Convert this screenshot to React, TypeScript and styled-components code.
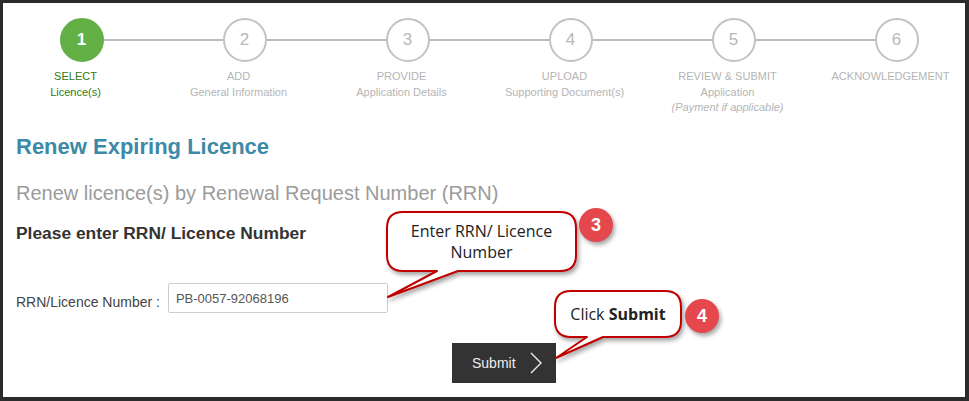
import React from 'react';
import styled, { createGlobalStyle } from 'styled-components';

const GlobalStyle = createGlobalStyle`
  html, body {
    margin: 0;
    padding: 0;
    overflow: hidden;
    background: #2b2b2b;
  }
  body {
    font-family: 'Liberation Sans', Arial, sans-serif;
  }
`;

const Page = styled.div`
  position: relative;
  width: 969px;
  height: 401px;
`;

const Frame = styled.div`
  box-sizing: border-box;
  width: 969px;
  height: 401px;
  border-style: solid;
  border-color: #2b2b2b;
  border-width: 3px 4px 4px 3px;
  background: #fff;
  overflow: hidden;
`;

const Stepper = styled.div`
  display: grid;
  grid-template-columns: repeat(6, 163px);
  margin: 15px 0 0 -3px;
`;

const Step = styled.div`
  display: flex;
  flex-direction: column;
  align-items: center;
`;

const CircleRow = styled.div`
  display: flex;
  align-items: center;
  width: 100%;
`;

const Line = styled.div<{ $off?: boolean }>`
  flex: 1;
  height: 2px;
  margin-top: -1px;
  background: ${({ $off }) => ($off ? 'transparent' : '#bcbcbc')};
`;

const Circle = styled.div<{ $active?: boolean }>`
  box-sizing: border-box;
  width: 44px;
  height: 44px;
  border-radius: 50%;
  border: 2px solid ${({ $active }) => ($active ? '#62b046' : '#c2c2c2')};
  background: ${({ $active }) => ($active ? '#62b046' : '#fff')};
  color: ${({ $active }) => ($active ? '#fff' : '#b8b8b8')};
  font-size: 17px;
  font-weight: ${({ $active }) => ($active ? 700 : 400)};
  display: flex;
  align-items: center;
  justify-content: center;
`;

const StepLabel = styled.div<{ $active?: boolean }>`
  margin-top: 6px;
  padding-right: 12px;
  font-size: 11px;
  line-height: 16px;
  text-align: center;
  color: ${({ $active }) => ($active ? '#2f7a10' : '#b5b5b5')};
  white-space: nowrap;
`;

const Note = styled.div`
  font-style: italic;
  line-height: 15px;
`;

const Content = styled.div`
  padding: 19px 13px 0;
`;

const Title = styled.h2`
  margin: 0;
  font-size: 22px;
  line-height: 26px;
  font-weight: 700;
  color: #3c8aa7;
`;

const Subtitle = styled.div`
  margin-top: 21px;
  font-size: 20px;
  line-height: 24px;
  color: #9b9b9b;
`;

const SectionHeading = styled.h3`
  margin: 18px 0 0;
  font-size: 17.4px;
  line-height: 20px;
  font-weight: 700;
  color: #333;
`;

const FormRow = styled.div`
  margin-top: 40px;
  display: flex;
  align-items: center;
  gap: 8px;
`;

const FieldLabel = styled.label`
  font-size: 14px;
  line-height: 16px;
  color: #444;
  padding-top: 8px;
`;

const TextInput = styled.input`
  box-sizing: border-box;
  width: 220px;
  height: 30px;
  border: 1px solid #ccc;
  border-radius: 2px;
  padding: 0 7px;
  font-family: 'Liberation Sans', Arial, sans-serif;
  font-size: 13px;
  color: #555;
  outline: none;
`;

const ButtonRow = styled.div`
  margin-top: 30px;
  padding-left: 436px;
`;

const SubmitButton = styled.button`
  box-sizing: border-box;
  width: 104px;
  height: 40px;
  border: none;
  background: #333;
  color: #eee;
  font-family: 'Liberation Sans', Arial, sans-serif;
  font-size: 14px;
  display: flex;
  align-items: center;
  padding: 0 0 0 20px;
  gap: 14px;
  cursor: pointer;
`;

const Bubble = styled.div<{ $left: number; $top: number; $w: number; $h: number }>`
  position: absolute;
  left: ${({ $left }) => $left}px;
  top: ${({ $top }) => $top}px;
  width: ${({ $w }) => $w}px;
  height: ${({ $h }) => $h}px;
`;

const BubbleShape = styled.svg`
  position: absolute;
  left: 0;
  top: 0;
  overflow: visible;
  filter: drop-shadow(2px 3px 2px rgba(0, 0, 0, 0.35));
`;

const BubbleText = styled.div`
  position: absolute;
  inset: 0;
  display: flex;
  align-items: center;
  justify-content: center;
  text-align: center;
  font-family: 'Open Sans', 'DejaVu Sans', sans-serif;
  font-size: 16px;
  line-height: 21px;
  color: #222;
  b {
    font-weight: 700;
  }
`;

const Badge = styled.div<{ $cx: number; $cy: number }>`
  position: absolute;
  left: ${({ $cx }) => $cx - 17}px;
  top: ${({ $cy }) => $cy - 17}px;
  width: 34px;
  height: 34px;
  border-radius: 50%;
  background: #e5484c;
  color: #fff;
  font-size: 18px;
  font-weight: 700;
  display: flex;
  align-items: center;
  justify-content: center;
  box-shadow: 2px 3px 4px rgba(0, 0, 0, 0.35);
`;

interface StepData {
  num: number;
  title: string;
  sub?: string;
  note?: string;
}

const steps: StepData[] = [
  { num: 1, title: 'SELECT', sub: 'Licence(s)' },
  { num: 2, title: 'ADD', sub: 'General Information' },
  { num: 3, title: 'PROVIDE', sub: 'Application Details' },
  { num: 4, title: 'UPLOAD', sub: 'Supporting Document(s)' },
  { num: 5, title: 'REVIEW & SUBMIT', sub: 'Application', note: '(Payment if applicable)' },
  { num: 6, title: 'ACKNOWLEDGEMENT' },
];

// bubble outline: rounded box with a tail pointing at (tipX, tipY)
function bubblePath(w: number, h: number, r: number, baseA: number, baseB: number, tipX: number, tipY: number) {
  return `M ${r} 0 H ${w - r} Q ${w} 0 ${w} ${r} V ${h - r} Q ${w} ${h} ${w - r} ${h} H ${baseB} L ${tipX} ${tipY} L ${baseA} ${h} H ${r} Q 0 ${h} 0 ${h - r} V ${r} Q 0 0 ${r} 0 Z`;
}

interface CalloutProps {
  x: number;
  y: number;
  w: number;
  h: number;
  baseA: number;
  baseB: number;
  tipX: number;
  tipY: number;
  children: React.ReactNode;
}

const Callout: React.FC<CalloutProps> = ({ x, y, w, h, baseA, baseB, tipX, tipY, children }) => (
  <Bubble $left={x} $top={y} $w={w} $h={h}>
    <BubbleShape width={w} height={h}>
      <path
        d={bubblePath(w, h, 16, baseA, baseB, tipX, tipY)}
        fill="#fff"
        stroke="#c00000"
        strokeWidth={2}
        strokeLinejoin="round"
      />
    </BubbleShape>
    <BubbleText>{children}</BubbleText>
  </Bubble>
);

const Chevron = () => (
  <svg width="12" height="22" viewBox="0 0 12 22">
    <path d="M1 1 L11 11 L1 21" fill="none" stroke="#eee" strokeWidth="1.4" />
  </svg>
);

export default function App() {
  return (
    <Page>
      <GlobalStyle />
      <Frame>
        <Stepper>
          {steps.map((s, i) => (
            <Step key={s.num}>
              <CircleRow>
                <Line $off={i === 0} />
                <Circle $active={i === 0}>{s.num}</Circle>
                <Line $off={i === steps.length - 1} />
              </CircleRow>
              <StepLabel $active={i === 0}>
                <div>{s.title}</div>
                {s.sub && <div>{s.sub}</div>}
                {s.note && <Note>{s.note}</Note>}
              </StepLabel>
            </Step>
          ))}
        </Stepper>
        <Content>
          <Title>Renew Expiring Licence</Title>
          <Subtitle>Renew licence(s) by Renewal Request Number (RRN)</Subtitle>
          <SectionHeading>Please enter RRN/ Licence Number</SectionHeading>
          <FormRow>
            <FieldLabel htmlFor="rrn">RRN/Licence Number :</FieldLabel>
            <TextInput id="rrn" defaultValue="PB-0057-92068196" />
          </FormRow>
          <ButtonRow>
            <SubmitButton>
              Submit
              <Chevron />
            </SubmitButton>
          </ButtonRow>
        </Content>
      </Frame>

      <Callout x={387} y={212} w={189} h={59} baseA={50} baseB={71} tipX={1} tipY={85}>
        Enter RRN/ Licence
        <br />
        Number
      </Callout>
      <Badge $cx={596} $cy={225}>3</Badge>

      <Callout x={555} y={291} w={126} h={46} baseA={32} baseB={48} tipX={1} tipY={67}>
        <span>
          Click <b>Submit</b>
        </span>
      </Callout>
      <Badge $cx={702} $cy={316}>4</Badge>
    </Page>
  );
}
